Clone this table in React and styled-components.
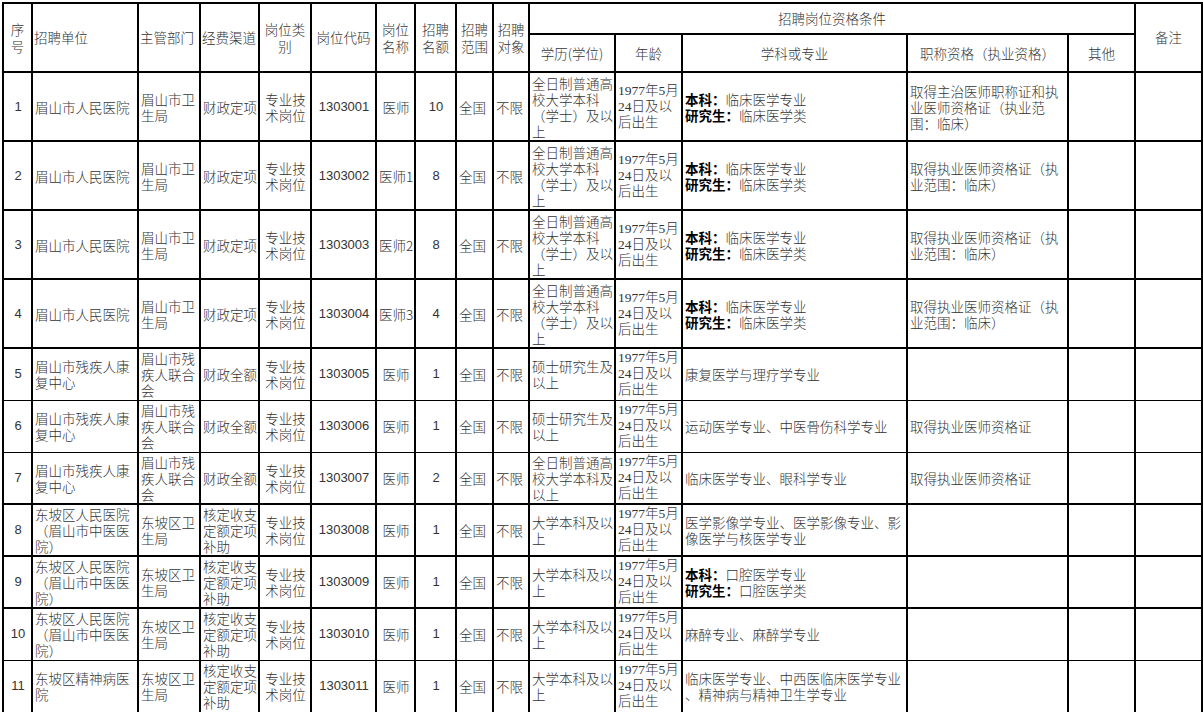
import React from "react";
import styled, { createGlobalStyle } from "styled-components";

const GlobalStyle = createGlobalStyle`
  html, body {
    margin: 0;
    padding: 0;
    background: #ffffff;
  }
  body {
    font-family: "Noto Sans CJK SC", sans-serif;
    color: #333333;
  }
`;

const COLS = [29, 106, 62, 59, 52, 65, 39, 41, 37, 36, 86, 67, 225, 161, 67, 67];

const Page = styled.div`
  padding: 2px 0 0 2px;
`;

const Sheet = styled.table`
  width: 1199px;
  table-layout: fixed;
  border-collapse: collapse;
  font-size: 13.5px;
  line-height: 16px;
  font-weight: 300;
`;

const HeadRow = styled.tr`
  height: ${(p) => p.$h}px;
`;

const HeadCell = styled.th`
  border: 2px solid #000;
  padding: 0 1px;
  font-weight: 300;
  line-height: 17px;
  text-align: ${(p) => p.$align || "center"};
  vertical-align: middle;
  white-space: pre;
  overflow: hidden;
`;

const Row = styled.tr`
  height: ${(p) => p.$h}px;
  & > td {
    border-top-width: ${(p) => (p.$thin ? 1 : 2)}px;
  }
`;

const Cell = styled.td`
  border-left: 2px solid #000;
  border-right: 2px solid #000;
  border-top: 2px solid #000;
  border-bottom: 1px solid #000;
  padding: 0 1px 0 2px;
  text-align: ${(p) => p.$align || "left"};
  vertical-align: middle;
  white-space: pre;
  overflow: hidden;
  font-family: ${(p) =>
    p.$font === "sans"
      ? '"Liberation Sans", "Noto Sans CJK SC", sans-serif'
      : p.$font === "serif"
      ? '"Liberation Serif", "Noto Sans CJK SC", serif'
      : '"Noto Sans CJK SC", sans-serif'};
  font-size: ${(p) => (p.$font === "sans" ? "13px" : "13.5px")};
  font-weight: ${(p) => (p.$font === "sans" ? 400 : 300)};
`;

const Label = styled.b`
  font-weight: 700;
  color: #000;
`;

const Major = ({ a, b }) => (
  <>
    <Label>本科：</Label>
    {a}
    {"\n"}
    <Label>研究生：</Label>
    {b}
  </>
);

const AGE = "1977年5月\n24日及以\n后出生";
const EDU_FULL = "全日制普通高\n校大学本科\n（学士）及以\n上";
const CERT_SHORT = "取得执业医师资格证（执\n业范围：临床）";

const rows = [
  {
    h: 69, no: "1", unit: "眉山市人民医院", dept: "眉山市卫\n生局", fund: "财政定项",
    code: "1303001", post: "医师", num: "10", edu: EDU_FULL,
    major: <Major a="临床医学专业" b="临床医学类" />,
    cert: "取得主治医师职称证和执\n业医师资格证（执业范\n围：临床）",
  },
  {
    h: 69, no: "2", unit: "眉山市人民医院", dept: "眉山市卫\n生局", fund: "财政定项",
    code: "1303002", post: "医师1", num: "8", edu: EDU_FULL,
    major: <Major a="临床医学专业" b="临床医学类" />, cert: CERT_SHORT,
  },
  {
    h: 69, no: "3", unit: "眉山市人民医院", dept: "眉山市卫\n生局", fund: "财政定项",
    code: "1303003", post: "医师2", num: "8", edu: EDU_FULL,
    major: <Major a="临床医学专业" b="临床医学类" />, cert: CERT_SHORT,
  },
  {
    h: 69, no: "4", unit: "眉山市人民医院", dept: "眉山市卫\n生局", fund: "财政定项",
    code: "1303004", post: "医师3", num: "4", edu: EDU_FULL,
    major: <Major a="临床医学专业" b="临床医学类" />, cert: CERT_SHORT,
  },
  {
    h: 52, no: "5", unit: "眉山市残疾人康\n复中心", dept: "眉山市残\n疾人联合\n会", fund: "财政全额",
    code: "1303005", post: "医师", num: "1", edu: "硕士研究生及\n以上",
    major: "康复医学与理疗学专业", cert: "",
  },
  {
    h: 52, thin: true, no: "6", unit: "眉山市残疾人康\n复中心", dept: "眉山市残\n疾人联合\n会", fund: "财政全额",
    code: "1303006", post: "医师", num: "1", edu: "硕士研究生及\n以上",
    major: "运动医学专业、中医骨伤科学专业", cert: "取得执业医师资格证",
  },
  {
    h: 52, thin: true, no: "7", unit: "眉山市残疾人康\n复中心", dept: "眉山市残\n疾人联合\n会", fund: "财政全额",
    code: "1303007", post: "医师", num: "2", edu: "全日制普通高\n校大学本科及\n以上",
    major: "临床医学专业、眼科学专业", cert: "取得执业医师资格证",
  },
  {
    h: 52, no: "8", unit: "东坡区人民医院\n（眉山市中医医\n院）", dept: "东坡区卫\n生局", fund: "核定收支\n定额定项\n补助",
    code: "1303008", post: "医师", num: "1", edu: "大学本科及以\n上",
    major: "医学影像学专业、医学影像专业、影\n像医学与核医学专业", cert: "",
  },
  {
    h: 52, no: "9", unit: "东坡区人民医院\n（眉山市中医医\n院）", dept: "东坡区卫\n生局", fund: "核定收支\n定额定项\n补助",
    code: "1303009", post: "医师", num: "1", edu: "大学本科及以\n上",
    major: <Major a="口腔医学专业" b="口腔医学类" />, cert: "",
  },
  {
    h: 52, no: "10", unit: "东坡区人民医院\n（眉山市中医医\n院）", dept: "东坡区卫\n生局", fund: "核定收支\n定额定项\n补助",
    code: "1303010", post: "医师", num: "1", edu: "大学本科及以\n上",
    major: "麻醉专业、麻醉学专业", cert: "",
  },
  {
    h: 52, thin: true, no: "11", unit: "东坡区精神病医\n院", dept: "东坡区卫\n生局", fund: "核定收支\n定额定项\n补助",
    code: "1303011", post: "医师", num: "1", edu: "大学本科及以\n上",
    major: "临床医学专业、中西医临床医学专业\n、精神病与精神卫生学专业", cert: "",
  },
];

export default function App() {
  return (
    <Page>
      <GlobalStyle />
      <Sheet>
        <colgroup>
          {COLS.map((w, i) => (
            <col key={i} style={{ width: w }} />
          ))}
        </colgroup>
        <thead>
          <HeadRow $h={31}>
            <HeadCell rowSpan={2}>{"序\n号"}</HeadCell>
            <HeadCell rowSpan={2} $align="left">招聘单位</HeadCell>
            <HeadCell rowSpan={2} $align="left">主管部门</HeadCell>
            <HeadCell rowSpan={2} $align="left">经费渠道</HeadCell>
            <HeadCell rowSpan={2}>{"岗位类\n别"}</HeadCell>
            <HeadCell rowSpan={2}>岗位代码</HeadCell>
            <HeadCell rowSpan={2}>{"岗位\n名称"}</HeadCell>
            <HeadCell rowSpan={2}>{"招聘\n名额"}</HeadCell>
            <HeadCell rowSpan={2}>{"招聘\n范围"}</HeadCell>
            <HeadCell rowSpan={2}>{"招聘\n对象"}</HeadCell>
            <HeadCell colSpan={5}>招聘岗位资格条件</HeadCell>
            <HeadCell rowSpan={2}>备注</HeadCell>
          </HeadRow>
          <HeadRow $h={38}>
            <HeadCell>学历(学位)</HeadCell>
            <HeadCell>年龄</HeadCell>
            <HeadCell>学科或专业</HeadCell>
            <HeadCell>职称资格（执业资格）</HeadCell>
            <HeadCell>其他</HeadCell>
          </HeadRow>
        </thead>
        <tbody>
          {rows.map((r) => (
            <Row key={r.code} $h={r.h} $thin={r.thin}>
              <Cell $align="center" $font="sans">{r.no}</Cell>
              <Cell>{r.unit}</Cell>
              <Cell>{r.dept}</Cell>
              <Cell>{r.fund}</Cell>
              <Cell $align="center">{"专业技\n术岗位"}</Cell>
              <Cell $align="center" $font="sans">{r.code}</Cell>
              <Cell $align="center">{r.post}</Cell>
              <Cell $align="center" $font="sans">{r.num}</Cell>
              <Cell>全国</Cell>
              <Cell>不限</Cell>
              <Cell>{r.edu}</Cell>
              <Cell $font="serif">{AGE}</Cell>
              <Cell>{r.major}</Cell>
              <Cell>{r.cert}</Cell>
              <Cell />
              <Cell />
            </Row>
          ))}
        </tbody>
      </Sheet>
    </Page>
  );
}
